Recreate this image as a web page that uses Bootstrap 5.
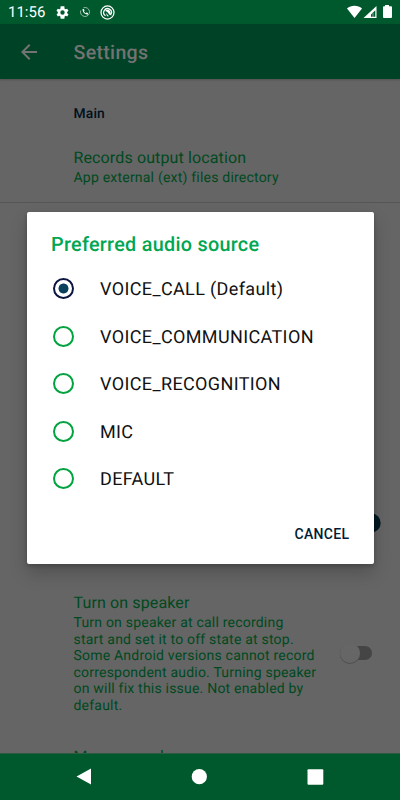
<!DOCTYPE html>
<html lang="en">
<head>
<meta charset="utf-8">
<meta name="viewport" content="width=device-width, initial-scale=1">
<title>Settings</title>
<link href="https://cdn.jsdelivr.net/npm/bootstrap@5.3.0/dist/css/bootstrap.min.css" rel="stylesheet">
<style>
body{font-family:Roboto,sans-serif;background:#656565;text-rendering:geometricPrecision}
svg{display:block;flex:none}
.screen{width:400px;height:800px}
.status{height:24px;background:#00592d;padding:0 7px 0 8px;color:#fff;font-size:15px}
.clock{line-height:24px;width:47px;white-space:nowrap}
.call-icon{margin-left:10px}
.record-icon{margin-left:10px}
.topbar{height:55px;background:#004225;color:#737373;padding-left:17px;box-shadow:0 1px 2px #0003;z-index:1}
.topbar h1{font-size:19.6px;font-weight:500;margin:2px 0 0 32.5px;letter-spacing:.3px}
.prefs{color:#00491f;background:#656565}
.pref-group{height:124px;padding:27px 0 0 73.5px;border-bottom:1px solid #555}
.section-name{color:#00101d;font-size:13.8px;font-weight:500;line-height:17px;letter-spacing:.2px}
.pref-title{font-size:16px;line-height:19px;letter-spacing:.13px;white-space:nowrap}
.pref-note{font-size:14px;line-height:16.6px;letter-spacing:.21px;white-space:nowrap}
.location-title{margin-top:25px}
.location-note{margin-top:3px}
.speaker-note{margin-top:3px}
.next-title{padding:32px 0 0 73.5px}
.hidden-rows{height:390px;padding:308.5px 19.5px 0 0}
.speaker{padding:0 27px 0 73.5px}
.navkeys{height:47px;background:#00592d;border-top:1px solid #2f5b42;padding:0 76.5px 0 75.5px}
.overlay{padding-top:212px;z-index:2}
.dialog-panel{width:347px;height:352px;border-radius:2px;padding:20.5px 24px 0 24.5px;box-shadow:0 9px 18px rgba(0,0,0,.2),0 2px 4px rgba(0,0,0,.2);color:#111;background:#fff}
.dialog-panel h2{font-size:19.8px;line-height:23px;font-weight:500;color:#00a651;margin:0 0 9.5px;letter-spacing:.29px}
.choice{height:47.55px;font-size:18px;padding-left:1.5px;gap:26.5px;white-space:nowrap;letter-spacing:.37px}
.choice span{padding-top:1.4px}
.choice input{appearance:none;width:21px;height:21px;border:2px solid #00a33f;border-radius:50%;margin:0;flex:none}
.choice input:checked{border-color:#0c1540;background:radial-gradient(circle,#09405c 4.7px,transparent 5.3px)}
.cancel{font-size:14px;font-weight:500;color:#001c35;letter-spacing:.35px;line-height:18px;background:none;margin-top:22px}
</style>
<script src="https://cdn.jsdelivr.net/npm/bootstrap@5.3.0/dist/js/bootstrap.bundle.min.js"></script>
</head>
<body class="overflow-hidden">
<div class="screen position-relative d-flex flex-column overflow-hidden">
  <div class="status d-flex align-items-center flex-shrink-0">
    <span class="clock">11:56</span>
    <svg width="15" height="15" viewBox="0 0 24 24" fill="#fff"><path fill-rule="evenodd" d="M19.4 13c.1-.7.1-1.300 0-2l2.100-1.700-2-3.500-2.500 1a8 8 0 0 0-1.700-1L15 2H9l-.4 3.800a8 8 0 0 0-1.700 1l-2.500-1-2 3.500L4.600 11a7 7 0 0 0 0 2l-2.100 1.700 2 3.500 2.500-1 1.600 1L9 22h6l.4-3.800 1.700-1 2.500 1 2-3.500zM12 15.500a3.500 3.500 0 1 1 0-7 3.500 3.500 0 0 1 0 7"/></svg>
    <svg class="call-icon" width="10" height="10" viewBox="0 0 20 20" fill="none" stroke="#c9ddd1"><path d="M7 1.500A9 9 0 1 1 1.500 7" stroke-width="1.500"/><path d="M5 4c0 6 4 11 11 11l0-3-3-1-1.500 1.500C9.500 11 8.500 10 8 8.500L9 7 8 4z" fill="#fff" stroke="none"/></svg>
    <svg class="record-icon" width="15" height="15" viewBox="0 0 30 30" fill="none" stroke="#fff"><circle cx="15" cy="15" r="13" stroke-width="2.500"/><path d="M11 21.500A7.700 7.700 0 1 1 22 18.500" stroke-width="2.500"/><path d="M10 12c3-4 8-3 10 0l3 9-5-2c-1-4-4-6-8-7z" fill="#fff" stroke="none"/><path d="M12 16l6 6.500h-4z" fill="#fff" stroke="none"/></svg>
    <svg class="ms-auto" width="46" height="14" viewBox="0 0 46 14"><path d="M0 3.500C4-.2 11-.2 15 3.500L7.500 13z" fill="#fff"/><path fill-rule="evenodd" d="M29.500 1v12h-13zM28.300 5.300 24 9.500v2.300h4.300z" fill="#fff"/><path d="M26 7.500v4.500" stroke="#b9d0c3" stroke-width=".7"/><path d="M38 0h4v1.200h2a1 1 0 0 1 1 1V12a1 1 0 0 1-1 1h-7a1 1 0 0 1-1-1V2.200a1 1 0 0 1 1-1h1z" fill="#fff"/></svg>
  </div>
  <header class="topbar d-flex align-items-center flex-shrink-0">
    <svg width="24" height="24" viewBox="0 0 24 24" fill="#737373"><path d="M20 11H7.800l5.600-5.600L12 4l-8 8 8 8 1.400-1.400L7.800 13H20z"/></svg>
    <h1>Settings</h1>
  </header>
  <main class="prefs flex-grow-1 overflow-hidden">
    <section class="pref-group">
      <div class="section-name">Main</div>
      <div class="pref-title location-title">Records output location</div>
      <div class="pref-note location-note">App external (ext) files directory</div>
    </section>
    <div class="hidden-rows d-flex justify-content-end">
      <svg width="34" height="22" viewBox="0 0 34 22"><rect x="0" y="4" width="30" height="14" rx="7" fill="#2a474f"/><circle cx="24" cy="11" r="9.700" fill="#001923"/></svg>
    </div>
    <section class="speaker d-flex justify-content-between align-items-center">
      <div>
        <div class="pref-title">Turn on speaker</div>
        <div class="pref-note speaker-note">Turn on speaker at call recording<br>start and set it to off state at stop.<br>Some Android versions cannot record<br>correspondent audio. Turning speaker<br>on will fix this issue. Not enabled by<br>default.</div>
      </div>
      <svg width="34" height="25" viewBox="0 0 34 25"><rect x="5" y="5" width="28" height="14" rx="7" fill="#454545"/><circle cx="11" cy="12.800" r="10.200" fill="#505050"/><circle cx="11" cy="12" r="10" fill="#666"/></svg>
    </section>
    <div class="pref-title next-title">Mono sound</div>
  </main>
  <nav class="navkeys d-flex align-items-center justify-content-between flex-shrink-0">
    <svg width="16" height="18" viewBox="0 0 16 18"><path d="M.5 8.500 15 .5v16z" fill="#fff"/></svg>
    <svg width="16" height="16" viewBox="0 0 16 16"><circle cx="8.300" cy="7.700" r="7.600" fill="#fff"/></svg>
    <svg width="17" height="17" viewBox="0 0 17 17"><rect x=".5" y=".2" width="15.800" height="15.500" rx="1" fill="#fff"/></svg>
  </nav>
  <div class="overlay position-absolute top-0 start-0 w-100 d-flex justify-content-center">
    <div class="dialog-panel d-flex flex-column" role="dialog" aria-labelledby="dialog-title">
      <h2 id="dialog-title">Preferred audio source</h2>
      <label class="choice d-flex align-items-center"><input type="radio" name="source" checked><span>VOICE_CALL (Default)</span></label>
      <label class="choice d-flex align-items-center"><input type="radio" name="source"><span>VOICE_COMMUNICATION</span></label>
      <label class="choice d-flex align-items-center"><input type="radio" name="source"><span>VOICE_RECOGNITION</span></label>
      <label class="choice d-flex align-items-center"><input type="radio" name="source"><span>MIC</span></label>
      <label class="choice d-flex align-items-center"><input type="radio" name="source"><span>DEFAULT</span></label>
      <button class="cancel btn border-0 p-0 align-self-end" type="button">CANCEL</button>
    </div>
  </div>
</div>
</body>
</html>
